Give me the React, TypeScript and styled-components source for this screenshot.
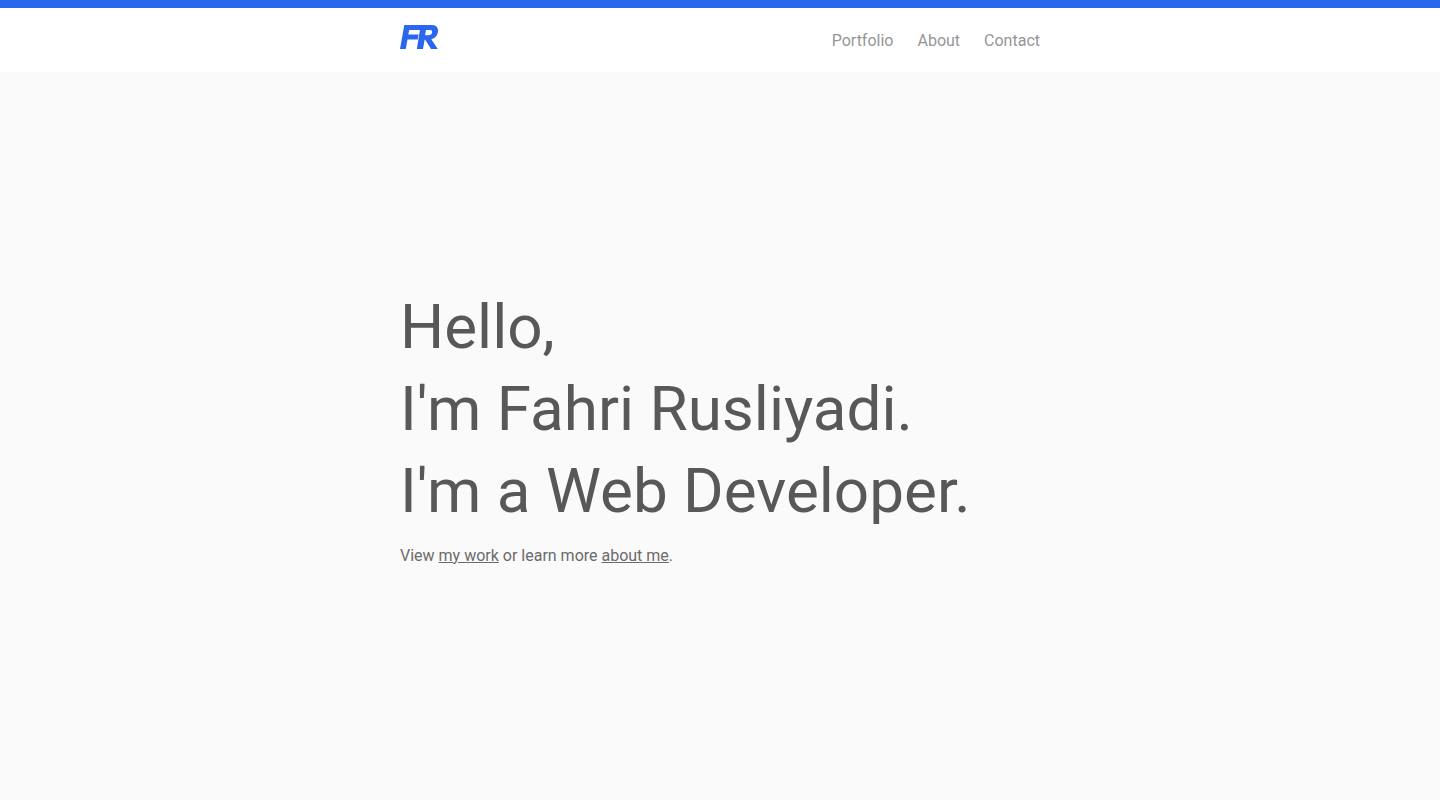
import React from "react";
import styled, { createGlobalStyle } from "styled-components";

const GlobalStyle = createGlobalStyle`
  *, *::before, *::after { box-sizing: border-box; }
  body {
    margin: 0;
    background: #fafafa;
    color: #6b6b6b;
    font: 16px/24px Roboto, "Liberation Sans", sans-serif;
  }
`;

const Page = styled.div`
  display: flex;
  flex-direction: column;
  min-height: 100vh;
`;

const Header = styled.header`
  border-top: 8px solid #2b67ee;
  background: #fff;
`;

const Container = styled.div`
  width: 100%;
  max-width: 672px;
  margin: 0 auto;
  padding: 0 16px;
`;

const Bar = styled(Container)`
  display: flex;
  align-items: center;
  justify-content: space-between;
  height: 64px;
`;

const LogoLink = styled.a`
  color: #2b67ee;
  padding-bottom: 6px;

  svg { display: block; }
`;

const Nav = styled.nav`
  display: flex;
  gap: 24px;
  padding-top: 2px;
`;

const NavLink = styled.a`
  color: #969696;
  text-decoration: none;
`;

const Main = styled.main`
  display: flex;
  flex: 1;
  align-items: center;
`;

const Title = styled.h1`
  margin: 0 0 12px;
  color: #585858;
  font-weight: 400;
  font-size: 62px;
  line-height: 82px;
`;

const Line = styled.span`
  display: block;
`;

const Intro = styled.p`
  margin: 0 0 18px;
`;

const TextLink = styled.a`
  color: inherit;
  text-decoration: underline;
  text-underline-offset: 1px;
`;

const Logo = () => (
  <svg width="38" height="24" viewBox="0 0 38 24" fill="currentColor" aria-hidden="true">
    <path d="M4.3 0H21.5L20.6 5H9.2L8.3 9.6H18.6L17.7 14.4H7.5L5.8 24H0Z" />
    <path
      fillRule="evenodd"
      d="M20.8 0H31.5C36 0 38.3 2 38 6C37.7 10.4 35.2 13.3 31.3 14.2L37.8 24H31L25.2 14.8H24.6L23 24H16.8ZM26 5L25.1 10.2H28.3C30.6 10.2 32 9.2 32.1 7.2C32.2 5.7 31.3 5 29.6 5Z"
    />
  </svg>
);

export default function App() {
  return (
    <Page>
      <GlobalStyle />
      <Header>
        <Bar>
          <LogoLink href="#" aria-label="Fahri Rusliyadi">
            <Logo />
          </LogoLink>
          <Nav>
            <NavLink href="#portfolio">Portfolio</NavLink>
            <NavLink href="#about">About</NavLink>
            <NavLink href="#contact">Contact</NavLink>
          </Nav>
        </Bar>
      </Header>
      <Main>
        <Container>
          <Title>
            <Line>Hello,</Line>
            <Line>I'm Fahri Rusliyadi.</Line>
            <Line>I'm a Web Developer.</Line>
          </Title>
          <Intro>
            View <TextLink href="#portfolio">my work</TextLink> or learn more{" "}
            <TextLink href="#about">about me</TextLink>.
          </Intro>
        </Container>
      </Main>
    </Page>
  );
}
